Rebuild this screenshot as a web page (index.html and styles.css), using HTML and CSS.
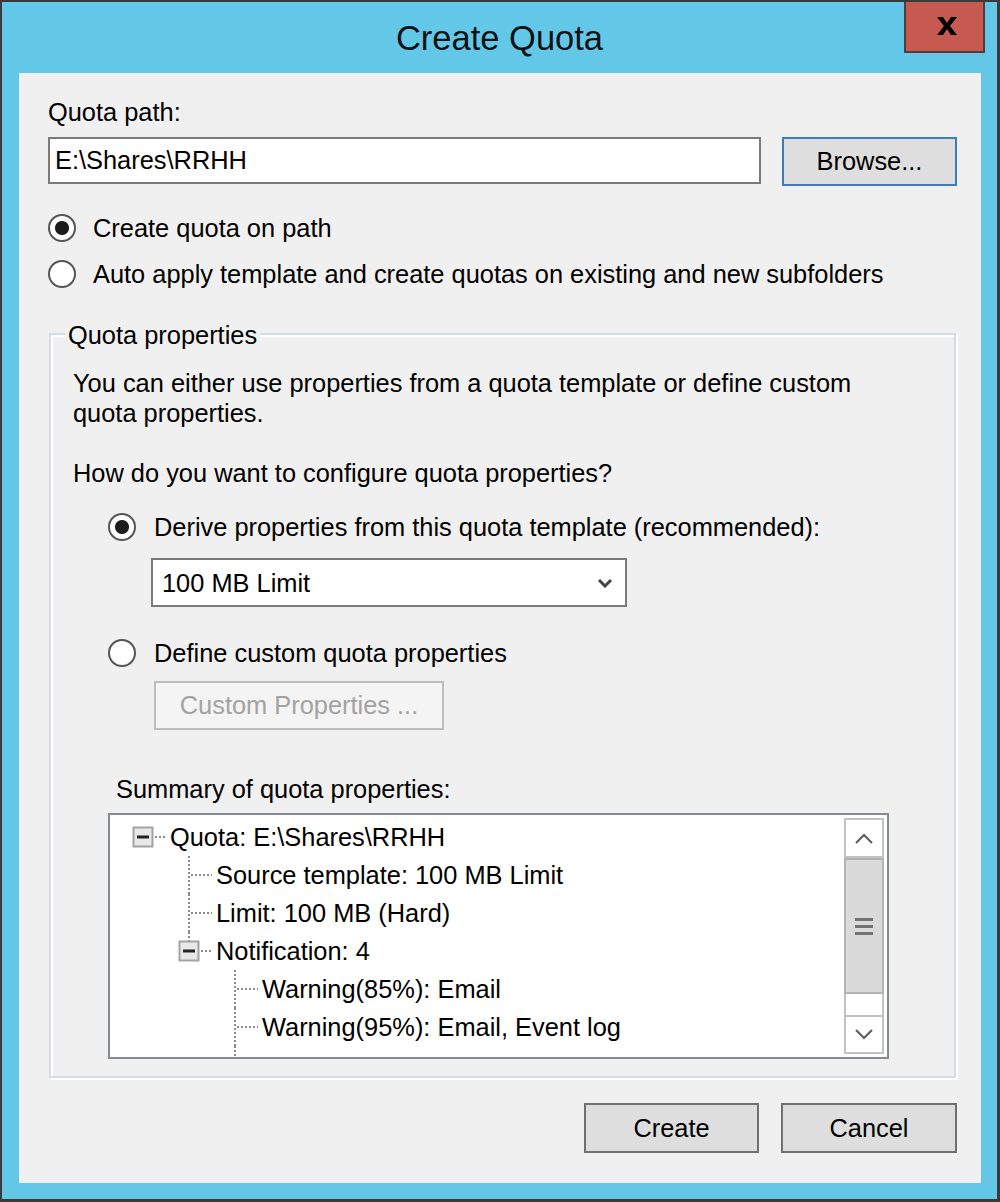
FILE: index.html
```html
<!DOCTYPE html>
<html lang="en">
<head>
<meta charset="utf-8">
<title>Create Quota</title>
<link rel="stylesheet" href="styles.css">
</head>
<body>
<div class="window">
  <div class="titlebar">
    <div class="title">Create Quota</div>
    <button class="close" aria-label="Close">
      <svg class="close-x" width="24" height="20" viewBox="0 0 24 20">
        <path d="M2 1 L8 1 L12 7 L16 1 L22 1 L15 10 L22 19 L16 19 L12 13 L8 19 L2 19 L9 10 Z" fill="#000"/>
      </svg>
    </button>
  </div>

  <div class="client">
    <div class="label">Quota path:</div>
    <div class="path-row">
      <div class="textbox">E:\Shares\RRHH</div>
      <button class="btn btn-focus browse">Browse...</button>
    </div>

    <div class="radio-row first"><span class="radio checked"></span><span>Create quota on path</span></div>
    <div class="radio-row"><span class="radio"></span><span>Auto apply template and create quotas on existing and new subfolders</span></div>

    <div class="group">
      <div class="group-title">Quota properties</div>
      <p class="desc">You can either use properties from a quota template or define custom<br>quota properties.</p>
      <div class="question">How do you want to configure quota properties?</div>

      <div class="radio-row sub derive"><span class="radio checked"></span><span>Derive properties from this quota template (recommended):</span></div>
      <div class="combo">
        <span>100 MB Limit</span>
        <svg class="combo-arrow" width="16" height="10" viewBox="0 0 16 10">
          <polyline points="2,2 8,8 14,2" fill="none" stroke="#444" stroke-width="3"/>
        </svg>
      </div>

      <div class="radio-row sub define"><span class="radio"></span><span>Define custom quota properties</span></div>
      <button class="btn btn-disabled custom" disabled>Custom Properties ...</button>

      <div class="summary-label">Summary of quota properties:</div>
      <div class="tree">
        <div class="tree-list">
          <div class="tree-row">
            <svg class="cell" width="46" height="38" viewBox="0 0 46 38">
              <rect x="13.5" y="9.5" width="19" height="19" fill="#e8e8e8" stroke="#a3a3a3" stroke-width="2"/>
              <rect x="17" y="17.5" width="12" height="3" fill="#222"/>
              <line x1="35" y1="19" x2="46" y2="19" class="dots"/>
            </svg>
            <span class="node">Quota: E:\Shares\RRHH</span>
          </div>
          <div class="tree-row">
            <span class="cell"></span>
            <svg class="cell" width="46" height="38" viewBox="0 0 46 38">
              <line x1="23" y1="0" x2="23" y2="38" class="dots"/>
              <line x1="25" y1="19" x2="46" y2="19" class="dots"/>
            </svg>
            <span class="node">Source template: 100 MB Limit</span>
          </div>
          <div class="tree-row">
            <span class="cell"></span>
            <svg class="cell" width="46" height="38" viewBox="0 0 46 38">
              <line x1="23" y1="0" x2="23" y2="38" class="dots"/>
              <line x1="25" y1="19" x2="46" y2="19" class="dots"/>
            </svg>
            <span class="node">Limit: 100 MB (Hard)</span>
          </div>
          <div class="tree-row">
            <span class="cell"></span>
            <svg class="cell" width="46" height="38" viewBox="0 0 46 38">
              <line x1="23" y1="0" x2="23" y2="9" class="dots"/>
              <rect x="13.5" y="9.5" width="19" height="19" fill="#e8e8e8" stroke="#a3a3a3" stroke-width="2"/>
              <rect x="17" y="17.5" width="12" height="3" fill="#222"/>
              <line x1="35" y1="19" x2="46" y2="19" class="dots"/>
            </svg>
            <span class="node">Notification: 4</span>
          </div>
          <div class="tree-row">
            <span class="cell"></span>
            <span class="cell"></span>
            <svg class="cell" width="46" height="38" viewBox="0 0 46 38">
              <line x1="23" y1="0" x2="23" y2="38" class="dots"/>
              <line x1="25" y1="19" x2="46" y2="19" class="dots"/>
            </svg>
            <span class="node">Warning(85%): Email</span>
          </div>
          <div class="tree-row">
            <span class="cell"></span>
            <span class="cell"></span>
            <svg class="cell" width="46" height="38" viewBox="0 0 46 38">
              <line x1="23" y1="0" x2="23" y2="38" class="dots"/>
              <line x1="25" y1="19" x2="46" y2="19" class="dots"/>
            </svg>
            <span class="node">Warning(95%): Email, Event log</span>
          </div>
          <div class="tree-row">
            <span class="cell"></span>
            <span class="cell"></span>
            <svg class="cell" width="46" height="38" viewBox="0 0 46 38">
              <line x1="23" y1="0" x2="23" y2="38" class="dots"/>
            </svg>
          </div>
        </div>
        <div class="scrollbar">
          <div class="sb-btn up">
            <svg width="18" height="11" viewBox="0 0 18 11"><polyline points="1,10 9,2 17,10" fill="none" stroke="#606060" stroke-width="2.2"/></svg>
          </div>
          <div class="sb-thumb">
            <svg width="18" height="17" viewBox="0 0 18 17">
              <rect x="0" y="0" width="18" height="3" fill="#737373"/>
              <rect x="0" y="7" width="18" height="3" fill="#737373"/>
              <rect x="0" y="14" width="18" height="3" fill="#737373"/>
            </svg>
          </div>
          <div class="sb-track"></div>
          <div class="sb-btn down">
            <svg width="18" height="11" viewBox="0 0 18 11"><polyline points="1,1 9,9 17,1" fill="none" stroke="#606060" stroke-width="2.2"/></svg>
          </div>
        </div>
      </div>
    </div>

    <div class="actions">
      <button class="btn create">Create</button>
      <button class="btn cancel">Cancel</button>
    </div>
  </div>
</div>
</body>
</html>
```

FILE: styles.css
```css
* {
  box-sizing: border-box;
}

html,
body {
  margin: 0;
  padding: 0;
}

body {
  width: 1000px;
  height: 1202px;
  overflow: hidden;
  font-family: "Liberation Sans", Arial, sans-serif;
  font-size: 25.4px;
  line-height: 30px;
  color: #000;
  background: #63c8e8;
}

.window {
  width: 1000px;
  height: 1202px;
  border-style: solid;
  border-color: #3a3a3a;
  border-width: 2px 3px 3px 2px;
  background: #63c8e8;
  display: flex;
  flex-direction: column;
}

/* title bar */
.titlebar {
  flex: none;
  height: 71px;
  display: grid;
  grid-template-columns: 1fr auto 1fr;
  align-items: start;
}

.title {
  grid-column: 2;
  margin-top: 16px;
  font-size: 34.5px;
  line-height: 40px;
  color: #111;
  white-space: nowrap;
}

.close {
  grid-column: 3;
  justify-self: end;
  margin: 0 12px 0 0;
  padding: 0;
  width: 81px;
  height: 51px;
  background: #c75a50;
  border-style: solid;
  border-color: #553b3b;
  border-width: 0 2px 2px 2px;
  display: flex;
  align-items: center;
  justify-content: center;
}

.close-x {
  display: block;
  margin: 0 0 2px 4px;
}

/* client area */
.client {
  flex: 1;
  margin: 0 16px 16px 17px;
  background: #f0f0f0;
  padding: 24px 24px 0 29px;
}

.label {
  height: 30px;
}

.path-row {
  margin-top: 10px;
  display: flex;
  align-items: flex-start;
  gap: 21px;
}

.textbox {
  width: 713px;
  height: 47px;
  border: 2px solid #7a7a7a;
  background: #fff;
  padding-left: 5px;
  line-height: 43px;
  white-space: nowrap;
}

.btn {
  font: inherit;
  color: #000;
  margin: 0;
  padding: 0;
  background: #dedede;
  border: 2px solid #707070;
  text-align: center;
  white-space: nowrap;
}

.btn-focus {
  border-color: #3d7db8;
}

.browse {
  width: 175px;
  height: 49px;
  line-height: 45px;
}

.radio-row {
  height: 46px;
  display: flex;
  align-items: center;
  white-space: nowrap;
}

.radio-row.first {
  margin-top: 19px;
}

.radio {
  flex: none;
  width: 28px;
  height: 28px;
  border-radius: 50%;
  border: 2px solid #555;
  background: #fff;
  margin-right: 17px;
}

.radio.checked {
  background: radial-gradient(circle, #1c1c1c 0 6.5px, #fff 7.5px);
}

/* group box */
.group {
  margin: 36px 1px 0 1px;
  width: 907px;
  border: 2px solid #d5dde4;
  box-shadow: inset 2px 2px 0 #fff, 2px 2px 0 #fff;
  padding: 0 0 17px 22px;
}

.group-title {
  width: fit-content;
  margin: -15.5px 0 0 -8px;
  padding: 0 3px;
  background: #f0f0f0;
  height: 30px;
}

.desc {
  margin: 18.5px 0 0 0;
}

.question {
  margin-top: 30px;
}

.radio-row.sub {
  padding-left: 35px;
}

.radio-row.sub .radio {
  margin-right: 18px;
}

.radio-row.derive {
  margin-top: 16px;
}

.radio-row.define {
  margin-top: 23px;
}

.combo {
  margin: 8px 0 0 78px;
  width: 476px;
  height: 49px;
  border: 2px solid #7a7a7a;
  background: #fff;
  display: flex;
  align-items: center;
  justify-content: space-between;
  padding: 0 12px 0 9px;
}

.combo-arrow {
  display: block;
}

.btn-disabled {
  background: #f4f4f4;
  border-color: #bdbdbd;
  color: #a2a2a2;
}

.custom {
  display: block;
  margin: 5px 0 0 81px;
  width: 290px;
  height: 49px;
  line-height: 45px;
}

.summary-label {
  margin: 44px 0 0 43px;
}

/* tree view */
.tree {
  margin: 9px 0 0 35px;
  width: 781px;
  height: 246px;
  border: 2px solid #858a90;
  background: #fff;
  display: flex;
  overflow: hidden;
}

.tree-list {
  flex: 1;
  padding: 3px 0 0 10px;
  overflow: hidden;
}

.tree-row {
  height: 38px;
  display: flex;
  align-items: center;
  white-space: nowrap;
}

.cell {
  flex: none;
  display: block;
  width: 46px;
  height: 38px;
}

.dots {
  stroke: #8a8a8a;
  stroke-width: 2;
  stroke-dasharray: 2 2;
}

.node {
  margin-left: 4px;
}

.scrollbar {
  flex: none;
  width: 40px;
  margin: 3px 3px 3px 0;
  display: flex;
  flex-direction: column;
}

.sb-btn {
  flex: none;
  background: #fff;
  border: 2px solid #c2c2c2;
  display: flex;
  align-items: center;
  justify-content: center;
}

.sb-btn svg {
  display: block;
}

.sb-btn.up {
  height: 40px;
}

.sb-btn.down {
  height: 39px;
}

.sb-thumb {
  flex: none;
  height: 136px;
  background: #dadada;
  border: 2px solid #b3b3b3;
  display: flex;
  align-items: center;
  justify-content: center;
}

.sb-thumb svg {
  display: block;
}

.sb-track {
  flex: 1;
  background: #fff;
  border-left: 2px solid #c2c2c2;
  border-right: 2px solid #c2c2c2;
}

/* dialog buttons */
.actions {
  margin-top: 25px;
  display: flex;
  justify-content: flex-end;
  gap: 22px;
}

.actions .btn {
  height: 50px;
  line-height: 46px;
}

.create {
  width: 175px;
}

.cancel {
  width: 176px;
}
```
